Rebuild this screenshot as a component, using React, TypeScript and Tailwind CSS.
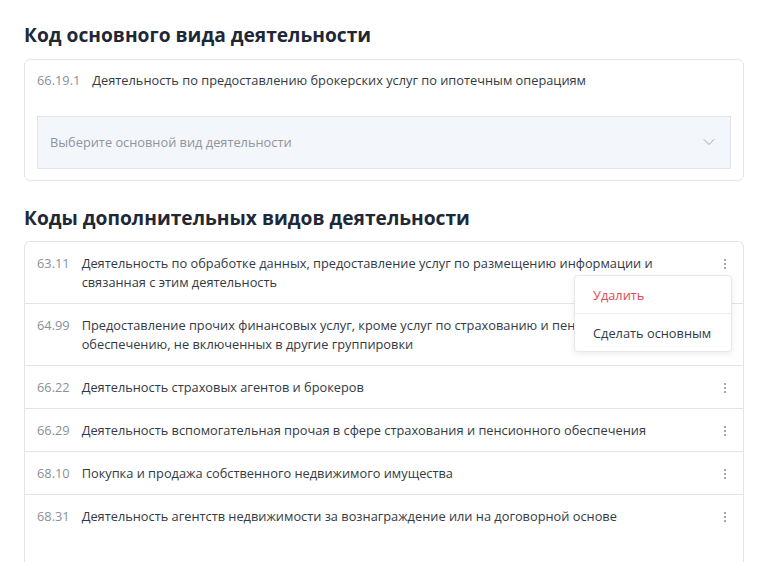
import { ChevronDown } from "lucide-react";

const EXTRA = [
  {
    code: "63.11",
    text: "Деятельность по обработке данных, предоставление услуг по размещению информации и связанная с этим деятельность",
    menu: true,
  },
  {
    code: "64.99",
    text: "Предоставление прочих финансовых услуг, кроме услуг по страхованию и пенсионному обеспечению, не включенных в другие группировки",
  },
  { code: "66.22", text: "Деятельность страховых агентов и брокеров" },
  {
    code: "66.29",
    text: "Деятельность вспомогательная прочая в сфере страхования и пенсионного обеспечения",
  },
  { code: "68.10", text: "Покупка и продажа собственного недвижимого имущества" },
  {
    code: "68.31",
    text: "Деятельность агентств недвижимости за вознаграждение или на договорной основе",
  },
];

function Kebab() {
  return (
    <svg width="4" height="12" viewBox="0 0 4 12" className="text-[#8c939c]">
      <circle cx="2" cy="2" r="1.1" fill="currentColor" />
      <circle cx="2" cy="6" r="1.1" fill="currentColor" />
      <circle cx="2" cy="10" r="1.1" fill="currentColor" />
    </svg>
  );
}

export default function App() {
  return (
    <div className="min-h-[562px] bg-white px-6 pt-[22px] font-['Open_Sans',sans-serif] text-[12.8px] leading-5 text-[#333a44]">
      {/* Main */}
      <h2 className="text-[19.2px] font-bold leading-[26px] text-[#1e2836]">
        Код основного вида деятельности
      </h2>
      <div className="mt-[11px] rounded-md border border-[#e1e4e8] px-3 pt-[10px] pb-[11px]">
        <div className="flex gap-3">
          <span className="text-[#8a9099]">66.19.1</span>
          <span>Деятельность по предоставлению брокерских услуг по ипотечным операциям</span>
        </div>
        <div className="mt-[26px] flex h-[53px] items-center justify-between border border-[#dfe4ea] bg-[#f3f6fa] pb-[2px] pl-3 pr-[11px]">
          <span className="text-[#8f959d]">Выберите основной вид деятельности</span>
          <ChevronDown size={20} strokeWidth={1.1} className="text-[#9aa1aa]" />
        </div>
      </div>

      {/* Extra */}
      <h2 className="mt-[24px] text-[19.2px] font-bold leading-[26px] text-[#1e2836]">
        Коды дополнительных видов деятельности
      </h2>
      <div className="mt-[10px] rounded-t-md border border-b-0 border-[#e1e4e8] pb-12">
        {EXTRA.map((row, i) => (
          <div
            key={row.code}
            className={`relative flex items-start gap-3 py-[11.5px] pl-3 pr-4 leading-[19px] ${i < EXTRA.length - 1 ? "border-b border-[#e1e4e8]" : ""}`}
          >
            <span className="shrink-0 text-[#8a9099]">{row.code}</span>
            <span className="flex-1 pr-[50px]">{row.text}</span>
            <span className="mt-1 shrink-0">
              <Kebab />
            </span>
            {row.menu && (
              <div className="absolute right-[11px] top-[33px] z-10 w-[158px] rounded-sm border border-[#e6e8eb] bg-white shadow-[0_2px_6px_rgba(0,0,0,0.08)]">
                <div className="whitespace-nowrap border-b border-[#eceef0] px-[18px] py-[8.5px] leading-5 text-[#e2474d]">Удалить</div>
                <div className="whitespace-nowrap px-[18px] py-[8.5px] leading-5 text-[#333a44]">Сделать основным</div>
              </div>
            )}
          </div>
        ))}
      </div>
    </div>
  );
}
